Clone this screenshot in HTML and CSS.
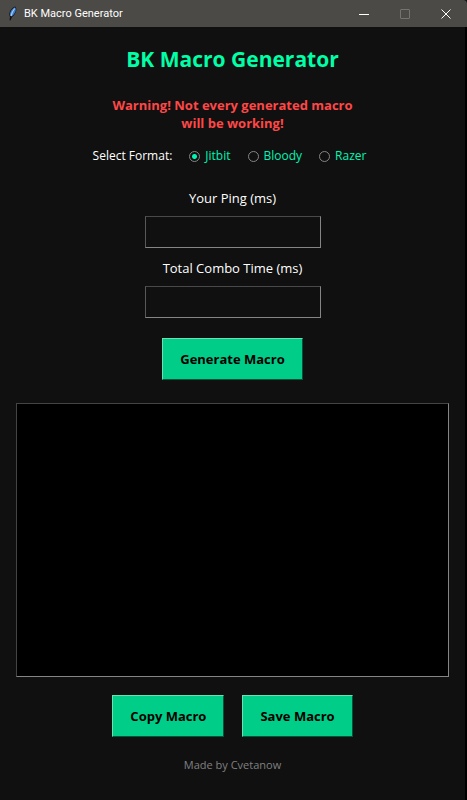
FILE: index.html
```html
<!DOCTYPE html>
<html lang="en">
<head>
<meta charset="utf-8">
<title>BK Macro Generator</title>
<link rel="stylesheet" href="styles.css">
</head>
<body>
<header class="titlebar">
  <svg class="feather" width="10" height="15" viewBox="0 0 10 15" aria-hidden="true">
    <path d="M7 0.5 C9.5 1.5 8.5 8 4 11 L2.5 14.5 L1.5 14.2 L2 11 C0 7 3 2 7 0.5Z" fill="#111318"/>
    <path d="M7 1.2 C8.8 3 7.4 7.8 3.8 10.2 L2.2 9.8 C1.2 6.5 4 2.6 7 1.2Z" fill="#3f7fd0"/>
    <path d="M6.6 2.5 C5 4.5 3.8 7 3 10" fill="none" stroke="#a8cdf5" stroke-width="1.2"/>
  </svg>
  <span class="caption">BK Macro Generator</span>
  <div class="controls">
    <button class="control" type="button" aria-label="Minimize"><svg width="10" height="10" viewBox="0 0 10 10"><path d="M0 5.5H10" stroke="#fff" fill="none"/></svg></button>
    <button class="control" type="button" aria-label="Maximize" disabled><svg width="10" height="10" viewBox="0 0 10 10"><rect x="0.5" y="0.5" width="9" height="9" rx="0.5" stroke="#747370" fill="none"/></svg></button>
    <button class="control" type="button" aria-label="Close"><svg width="10" height="10" viewBox="0 0 10 10"><path d="M0.5 0.5L9.5 9.5M9.5 0.5L0.5 9.5" stroke="#fff" fill="none"/></svg></button>
  </div>
</header>
<main class="content">
  <h1 class="title">BK Macro Generator</h1>
  <p class="warning">Warning! Not every generated macro<br>will be working!</p>
  <fieldset class="formats">
    <legend class="formats-label">Select Format:</legend>
    <label class="option"><input type="radio" name="format" checked>Jitbit</label>
    <label class="option"><input type="radio" name="format">Bloody</label>
    <label class="option"><input type="radio" name="format">Razer</label>
  </fieldset>
  <label class="field-label" for="ping">Your Ping (ms)</label>
  <input class="field" id="ping" type="text">
  <label class="field-label" for="combo">Total Combo Time (ms)</label>
  <input class="field" id="combo" type="text">
  <button class="button generate" type="button">Generate Macro</button>
  <textarea class="output" aria-label="Generated macro"></textarea>
  <div class="actions">
    <button class="button" type="button">Copy Macro</button>
    <button class="button" type="button">Save Macro</button>
  </div>
  <footer class="credit">Made by Cvetanow</footer>
</main>
</body>
</html>
```
FILE: styles.css
```css
* {
  box-sizing: border-box;
}

body {
  margin: 0;
  min-height: 100vh;
  display: flex;
  flex-direction: column;
  background: #101010;
  color: #fff;
  font-family: "Open Sans", "Noto Sans", sans-serif;
}

.titlebar {
  display: flex;
  align-items: center;
  height: 27px;
  padding: 0 1px 0 8px;
  background: #4b4a47;
  border-top-right-radius: 4px;
}

.caption {
  margin-left: 6px;
  font-family: Roboto, "Open Sans", sans-serif;
  font-size: 11px;
}

.controls {
  display: flex;
  align-self: stretch;
  margin-left: auto;
}

.control {
  display: flex;
  align-items: center;
  justify-content: center;
  width: 41px;
  padding: 0;
  border: 0;
  background: none;
}

.content {
  flex: 1;
  display: flex;
  flex-direction: column;
  align-items: center;
  padding: 16px 16px 26px;
  border-right: 2px solid #000;
}

.title {
  margin: 0;
  font-size: 21px;
  line-height: 32px;
  color: #00ffa6;
}

.warning {
  margin: 21px 0 0;
  font-size: 13px;
  font-weight: 700;
  line-height: 18px;
  text-align: center;
  color: #ff4747;
}

.formats {
  display: flex;
  align-items: center;
  gap: 17px;
  margin: 14px 0 0;
  padding: 0 6px 0 0;
  border: 0;
  font-size: 12px;
  line-height: 20px;
}

.formats-label {
  float: left;
  padding: 0;
}

.option {
  display: flex;
  align-items: center;
  gap: 5px;
  color: #00f5b4;
}

.option input {
  appearance: none;
  width: 11px;
  height: 11px;
  margin: 0;
  border: 1px solid #858585;
  border-radius: 50%;
}

.option input:checked {
  background: radial-gradient(circle, #00f5b4 2px, transparent 3px);
}

.field-label {
  margin-top: 10px;
  font-size: 13px;
  line-height: 20px;
}

.formats + .field-label {
  margin-top: 22px;
}

.field {
  width: 176px;
  height: 32px;
  margin-top: 8px;
  padding: 4px 8px;
  border: 1px solid;
  border-color: #494949 #858585 #858585 #585858;
  background: #101010;
  color: #fff;
  font: inherit;
  font-size: 13px;
}

.button {
  height: 42px;
  padding: 0 17px;
  border: 1px solid;
  border-color: #66e3b4 #00553a #00553a #66e3b4;
  background: #00ce88;
  color: #000;
  font: inherit;
  font-size: 13px;
  font-weight: 700;
}

.generate {
  margin-top: 20px;
}

.output {
  flex: 1;
  align-self: stretch;
  margin-top: 23px;
  padding: 8px;
  border: 1px solid;
  border-color: #444 #858585 #858585 #444;
  background: #000;
  color: #fff;
  font: inherit;
  font-size: 13px;
  resize: none;
}

.actions {
  display: flex;
  gap: 18px;
  margin-top: 18px;
}

.credit {
  margin-top: 19px;
  font-size: 11px;
  line-height: 18px;
  color: #808080;
}
```
